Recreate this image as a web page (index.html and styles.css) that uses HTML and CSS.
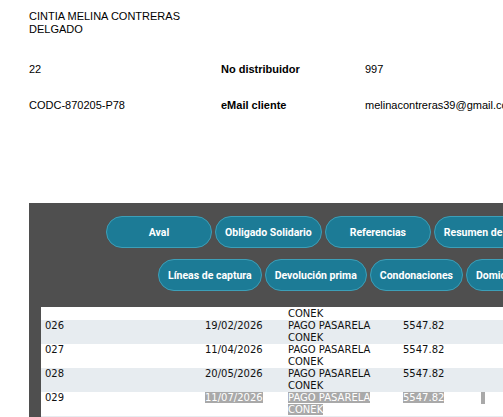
FILE: index.html
```html
<!DOCTYPE html>
<html lang="es">
<head>
  <meta charset="UTF-8" />
  <meta name="viewport" content="width=device-width, initial-scale=1.0"/>
  <title>Detalle de cliente</title>
  <link rel="stylesheet" href="styles.css">
</head>
<body>
  <div class="cliente">
    <div class="nombre">CINTIA MELINA CONTRERAS DELGADO</div>
    <div class="fila primera">
      <span>22</span>
      <span class="etiqueta">No distribuidor</span>
      <span>997</span>
    </div>
    <div class="fila">
      <span>CODC-870205-P78</span>
      <span class="etiqueta">eMail cliente</span>
      <span>melinacontreras39@gmail.com</span>
    </div>
  </div>

  <div class="panel">
    <div class="botones arriba">
      <button class="boton">Aval</button>
      <button class="boton">Obligado Solidario</button>
      <button class="boton">Referencias</button>
      <button class="boton">Resumen de pagos</button>
    </div>
    <div class="botones abajo">
      <button class="boton">Líneas de captura</button>
      <button class="boton">Devolución prima</button>
      <button class="boton">Condonaciones</button>
      <button class="boton">Domiciliación</button>
    </div>

    <div class="pagos">
      <table>
        <tr>
          <td>025</td>
          <td>12/01/2026</td>
          <td>PAGO PASARELA CONEK</td>
          <td>5547.82</td>
          <td></td>
        </tr>
        <tr class="par">
          <td>026</td>
          <td>19/02/2026</td>
          <td>PAGO PASARELA CONEK</td>
          <td>5547.82</td>
          <td></td>
        </tr>
        <tr>
          <td>027</td>
          <td>11/04/2026</td>
          <td>PAGO PASARELA CONEK</td>
          <td>5547.82</td>
          <td></td>
        </tr>
        <tr class="par">
          <td>028</td>
          <td>20/05/2026</td>
          <td>PAGO PASARELA CONEK</td>
          <td>5547.82</td>
          <td></td>
        </tr>
        <tr>
          <td>029</td>
          <td><span class="sel">11/07/2026</span></td>
          <td><span class="sel">PAGO PASARELA </span><span class="sel">CONEK</span></td>
          <td><span class="sel">5547.82</span></td>
          <td><span class="sel vacio"></span></td>
        </tr>
        <tr class="par">
          <td>030</td>
          <td>14/08/2026</td>
          <td>PAGO PASARELA CONEK</td>
          <td>5547.82</td>
          <td></td>
        </tr>
      </table>
    </div>
  </div>
</body>
</html>
```

FILE: styles.css
```css
body {
  margin: 0;
  font-family: 'Liberation Sans', Arial, sans-serif;
  font-size: 11px;
  color: #000;
  background-color: #fff;
  overflow: hidden;
}

.cliente {
  padding: 10px 0 0 29px;
  line-height: 13px;
}

.nombre {
  width: 190px;
}

.fila {
  display: grid;
  grid-template-columns: 192px 144px auto;
  margin-top: 23px;
  white-space: nowrap;
}

.fila.primera {
  margin-top: 27px;
}

.etiqueta {
  font-weight: bold;
}

.panel {
  margin: 91px 0 0 29px;
  width: 720px;
  padding: 13px 0 0 12px;
  background-color: #4f4f4f;
}

.botones {
  display: flex;
  gap: 3px;
}

.botones.arriba {
  margin-left: 65px;
}

.botones.abajo {
  margin-left: 117px;
  margin-top: 11px;
}

.boton {
  height: 32px;
  padding: 0 9px;
  border: 1px solid #3c9fb8;
  border-radius: 16px;
  background-color: #1c7b96;
  color: #fff;
  font-family: Roboto, 'Noto Sans', sans-serif;
  font-size: 10.5px;
  font-weight: bold;
  white-space: nowrap;
  cursor: pointer;
}

.botones.arriba .boton {
  min-width: 106px;
}

/* listado con scroll: la primera fila queda medio oculta */
.pagos {
  margin-top: 16px;
  height: 110px;
  background-color: #fff;
  overflow: hidden;
}

.pagos table {
  margin-top: -11px;
  border-collapse: collapse;
  font-family: 'DejaVu Sans', Verdana, sans-serif;
  font-size: 10px;
  line-height: 12px;
  color: #111;
}

.pagos td {
  padding: 0 4px;
  vertical-align: top;
}

.pagos td:nth-child(1) { width: 152px; }
.pagos td:nth-child(2) { width: 75px; }
.pagos td:nth-child(3) { width: 107px; }
.pagos td:nth-child(4) { width: 70px; }
.pagos td:nth-child(5) { width: 40px; }

.pagos tr.par {
  background-color: #e7ecf0;
}

.sel {
  background-color: #a9a9a9;
  color: #fff;
}

.sel.vacio {
  display: inline-block;
  width: 4px;
  height: 12px;
  vertical-align: top;
}
```
